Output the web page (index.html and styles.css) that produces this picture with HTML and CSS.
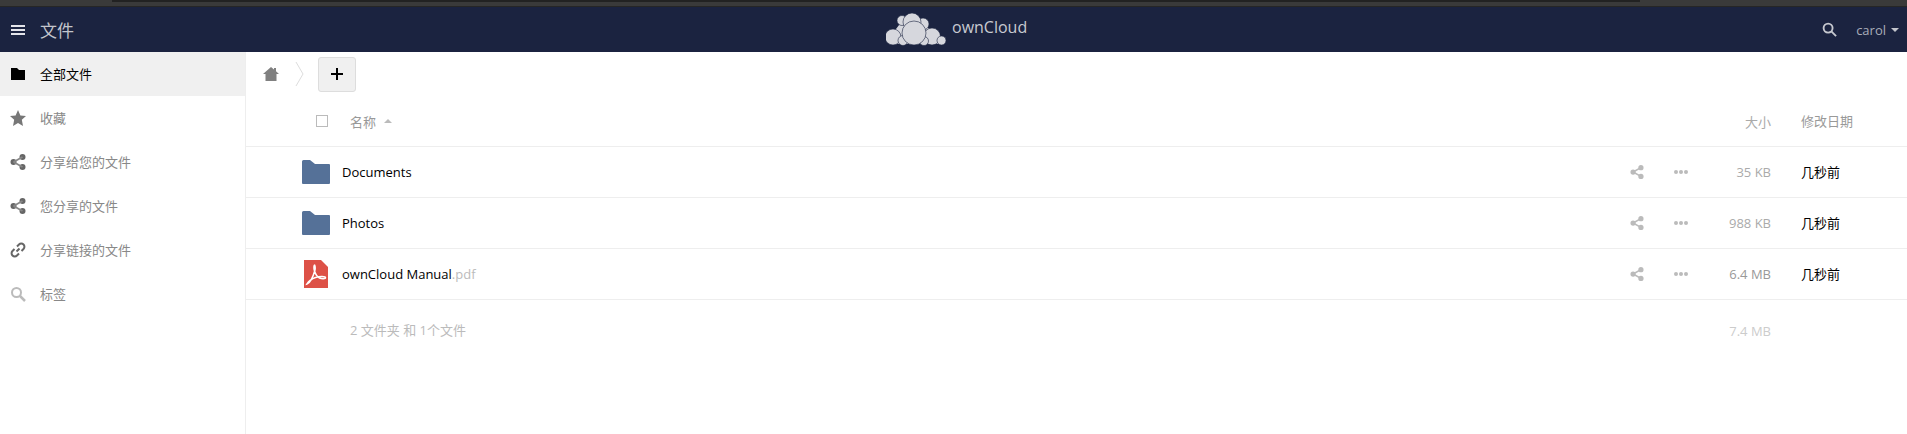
FILE: index.html
```html
<!DOCTYPE html>
<html lang="zh">
<head>
    <meta charset="UTF-8">
    <meta name="viewport" content="width=device-width, initial-scale=1.0">
    <title>文件 - ownCloud</title>
    <link rel="stylesheet" href="styles.css">
</head>
<body>
    <div class="top-strip"><div class="top-strip-dark"></div></div>
    <header class="header">
        <div class="header-left">
            <svg class="menu-icon" viewBox="0 0 14 10"><path d="M0 0h14v2H0zM0 4h14v2H0zM0 8h14v2H0z"/></svg>
            <span class="app-name">文件</span>
        </div>
        <div class="logo">
            <svg class="logo-cloud" viewBox="0 0 60 33">
                <path class="cloud-fill" d="M7 31V20L16 8h21l9 12 10 11z"/>
                <circle cx="7" cy="24" r="8"/>
                <circle cx="16" cy="7.500" r="5"/>
                <circle cx="37" cy="11" r="6"/>
                <circle cx="26" cy="9" r="9"/>
                <circle cx="46" cy="23.500" r="8.500"/>
                <circle cx="55.500" cy="27.500" r="4.500"/>
                <circle cx="17" cy="27.500" r="5"/>
                <circle cx="38" cy="28" r="4.500"/>
                <circle cx="28" cy="20" r="12"/>
            </svg>
            <span class="logo-text">ownCloud</span>
        </div>
        <div class="header-right">
            <svg class="search-icon" viewBox="0 0 16 16"><circle cx="6.500" cy="6.500" r="4.800"/><path d="M10 10l5 5"/></svg>
            <span class="user">carol</span>
            <span class="caret"></span>
        </div>
    </header>
    <div class="main">
        <nav class="sidebar">
            <a class="nav-item active">
                <svg class="nav-icon" viewBox="0 0 16 16"><path d="M1 2h6l2 2h6v10H1z" fill="#000"/></svg>
                <span class="nav-label">全部文件</span>
            </a>
            <a class="nav-item">
                <svg class="nav-icon" viewBox="0 0 16 16"><path d="M8 0l2.400 5.400 5.600.6-4.200 3.800L13 16l-5-3-5 3 1.200-6.200L0 6l5.600-.6z" fill="#777"/></svg>
                <span class="nav-label">收藏</span>
            </a>
            <a class="nav-item">
                <svg class="nav-icon" viewBox="0 0 16 16"><use href="#share"/></svg>
                <span class="nav-label">分享给您的文件</span>
            </a>
            <a class="nav-item">
                <svg class="nav-icon" viewBox="0 0 16 16"><use href="#share"/></svg>
                <span class="nav-label">您分享的文件</span>
            </a>
            <a class="nav-item">
                <svg class="nav-icon" viewBox="0 0 16 16"><path d="M6.500 9.500l3-3M7 4.500l2-2a2.800 2.800 0 0 1 4.500 4.500l-2 2M9 11.500l-2 2A2.800 2.800 0 0 1 2.500 9l2-2" fill="none" stroke="#666" stroke-width="2"/></svg>
                <span class="nav-label">分享链接的文件</span>
            </a>
            <a class="nav-item">
                <svg class="nav-icon" viewBox="0 0 16 16"><circle cx="6.500" cy="6.500" r="4.500" fill="none" stroke="#bbb" stroke-width="2"/><path d="M10 10l5 5" stroke="#bbb" stroke-width="2.500"/></svg>
                <span class="nav-label">标签</span>
            </a>
        </nav>
        <section class="content">
            <div class="crumbs">
                <svg class="home-icon" viewBox="0 0 16 14"><path d="M8 0l3 2.600V1h2v3.300L16 7h-2.500v7h-11V7H0z"/></svg>
                <svg class="crumb-sep" viewBox="0 0 9 26"><path d="M1 1l7 12-7 12" fill="none" stroke="#ddd"/></svg>
                <button class="new-btn" type="button">
                    <svg viewBox="0 0 12 12"><path d="M5 0h2v5h5v2H7v5H5V7H0V5h5z"/></svg>
                </button>
            </div>
            <div class="row row-head">
                <div class="col-check"><span class="checkbox"></span></div>
                <div class="col-name head-name">名称 <span class="sort-arrow"></span></div>
                <div class="col-size">大小</div>
                <div class="col-date head-date"><span class="date-label">修改日期</span></div>
            </div>
            <div class="row file-row">
                <div class="col-icon"><svg class="folder" viewBox="0 0 28 24"><use href="#folder"/></svg></div>
                <div class="col-name">Documents</div>
                <div class="actions"><svg class="act-share" viewBox="0 0 16 16"><use href="#share"/></svg><svg class="act-more" viewBox="0 0 14 4"><use href="#dots"/></svg></div>
                <div class="col-size">35 KB</div>
                <div class="col-date"><span class="date-label">几秒前</span></div>
            </div>
            <div class="row file-row">
                <div class="col-icon"><svg class="folder" viewBox="0 0 28 24"><use href="#folder"/></svg></div>
                <div class="col-name">Photos</div>
                <div class="actions"><svg class="act-share" viewBox="0 0 16 16"><use href="#share"/></svg><svg class="act-more" viewBox="0 0 14 4"><use href="#dots"/></svg></div>
                <div class="col-size">988 KB</div>
                <div class="col-date"><span class="date-label">几秒前</span></div>
            </div>
            <div class="row file-row">
                <div class="col-icon">
                    <svg class="pdf" viewBox="0 0 24 28">
                        <path d="M0 0h17l7 7v21H0z" fill="#dd5147"/>
                        <path d="M3 24c3-1 6-7 8-14 .5-2 0-5-.5-5s-1 3 0 6c1 3 3 6 5 7 2 .8 6 1 6-.3 0-1.500-6-1.500-10-.2-3 1-7 4-8.500 6.500z" fill="none" stroke="#fff" stroke-width="1.500"/>
                    </svg>
                </div>
                <div class="col-name">ownCloud Manual<span class="ext">.pdf</span></div>
                <div class="actions"><svg class="act-share" viewBox="0 0 16 16"><use href="#share"/></svg><svg class="act-more" viewBox="0 0 14 4"><use href="#dots"/></svg></div>
                <div class="col-size size-dark">6.4 MB</div>
                <div class="col-date"><span class="date-label">几秒前</span></div>
            </div>
            <div class="row row-summary">
                <div class="col-check"></div>
                <div class="col-name summary-name">2 文件夹 和 1个文件</div>
                <div class="col-size">7.4 MB</div>
                <div class="col-date"></div>
            </div>
        </section>
    </div>
    <svg class="defs" width="0" height="0">
        <defs>
            <g id="share"><circle cx="3.500" cy="8" r="3"/><circle cx="12.500" cy="3" r="3"/><circle cx="12.500" cy="13" r="3"/><path d="M3.500 8l9-5M3.500 8l9 5" stroke="currentColor" stroke-width="1.800"/></g>
            <path id="folder" d="M0 1.500Q0 0 1.500 0H8l5 4h14q1 0 1 1v18q0 1-1 1H1q-1 0-1-1z"/>
            <g id="dots"><circle cx="2" cy="2" r="2"/><circle cx="7" cy="2" r="2"/><circle cx="12" cy="2" r="2"/></g>
        </defs>
    </svg>
</body>
</html>
```

FILE: styles.css
```css
* {
    box-sizing: border-box;
}
body {
    margin: 0;
    height: 434px;
    overflow: hidden;
    font-family: "Open Sans", "Noto Sans CJK SC", sans-serif;
    font-size: 13px;
    color: #000;
    background: #fff;
}
.defs {
    position: absolute;
}
.top-strip {
    height: 7px;
    background: #3a3a3a;
    border-bottom: 1px solid #262626;
}
.top-strip-dark {
    height: 2px;
    margin: 0 267px 0 112px;
    background: #222;
}
.header {
    height: 45px;
    background: #1b2340;
    display: flex;
    align-items: center;
    justify-content: space-between;
    position: relative;
}
.header-left {
    display: flex;
    align-items: center;
    padding-left: 11px;
}
.menu-icon {
    width: 14px;
    height: 10px;
    fill: #e4e4ea;
}
.app-name {
    margin-left: 15px;
    font-size: 17px;
    color: #c3c5cc;
}
.logo {
    position: absolute;
    left: 886px;
    top: 6px;
    display: flex;
    align-items: flex-start;
}
.logo-cloud {
    width: 60px;
    height: 33px;
    fill: #d6d7dd;
    stroke: #1b2340;
    stroke-width: 0.6;
}
.cloud-fill {
    stroke: none;
}
.logo-text {
    margin-left: 6px;
    margin-top: 3px;
    font-size: 16px;
    color: #c8cad1;
}
.header-right {
    display: flex;
    align-items: center;
    padding-right: 8px;
}
.search-icon {
    width: 15px;
    height: 15px;
    fill: none;
    stroke: #c6c8cf;
    stroke-width: 2;
}
.user {
    margin-left: 19px;
    color: #a9adb9;
}
.caret {
    margin-left: 5px;
    border-left: 4px solid transparent;
    border-right: 4px solid transparent;
    border-top: 4px solid #c3c5cc;
}
.main {
    display: flex;
    height: 382px;
}
.sidebar {
    width: 246px;
    flex: none;
    border-right: 1px solid #eee;
}
.nav-item {
    height: 44px;
    display: flex;
    align-items: center;
    padding-left: 10px;
    color: #888;
    fill: #666;
}
.nav-item.active {
    background: #f0f0f0;
    color: #000;
}
.nav-icon {
    width: 16px;
    height: 16px;
    margin-right: 14px;
}
.nav-label {
    margin-bottom: 2px;
}
.content {
    flex: 1;
}
.crumbs {
    height: 44px;
    display: flex;
    align-items: center;
    padding-left: 17px;
}
.home-icon {
    width: 16px;
    height: 14px;
    fill: #808080;
}
.crumb-sep {
    width: 9px;
    height: 26px;
    margin-left: 16px;
    margin-right: 14px;
}
.new-btn {
    width: 38px;
    height: 35px;
    padding: 0;
    background: #f0f0f0;
    border: 1px solid #ddd;
    border-radius: 3px;
    display: flex;
    align-items: center;
    justify-content: center;
}
.new-btn svg {
    width: 12px;
    height: 12px;
}
.row {
    display: flex;
    align-items: center;
    border-bottom: 1px solid #eee;
}
.row-head {
    height: 51px;
    color: #999;
}
.file-row {
    height: 51px;
}
.row-summary {
    height: 61px;
    border-bottom: 0;
    color: #bbb;
}
.summary-name {
    margin-bottom: 2px;
}
.col-check {
    width: 104px;
    flex: none;
    padding-left: 70px;
}
.checkbox {
    display: block;
    width: 12px;
    height: 12px;
    border: 1px solid #bbb;
}
.col-icon {
    width: 96px;
    flex: none;
    display: flex;
    justify-content: center;
    padding-left: 44px;
}
.folder {
    width: 28px;
    height: 24px;
    fill: #557198;
    flex: none;
}
.pdf {
    width: 24px;
    height: 28px;
    flex: none;
}
.col-name {
    flex: 1;
}
.head-name {
    display: flex;
    align-items: center;
    gap: 8px;
}
.sort-arrow {
    border-left: 4px solid transparent;
    border-right: 4px solid transparent;
    border-bottom: 4px solid #bbb;
}
.ext {
    color: #bbb;
}
.actions {
    display: flex;
    align-items: center;
    gap: 30px;
    margin-right: 23px;
    color: #bbb;
    fill: #bbb;
}
.act-share {
    width: 14px;
    height: 14px;
}
.act-more {
    width: 14px;
    height: 4px;
}
.col-size {
    width: 60px;
    flex: none;
    text-align: right;
    color: #aaa;
}
.size-dark {
    color: #999;
}
.row-summary .col-size {
    color: #ccc;
}
.col-date {
    width: 136px;
    flex: none;
    padding-left: 30px;
}
.date-label {
    display: block;
    margin-bottom: 2px;
}
.head-date {
    color: #999;
}
```
